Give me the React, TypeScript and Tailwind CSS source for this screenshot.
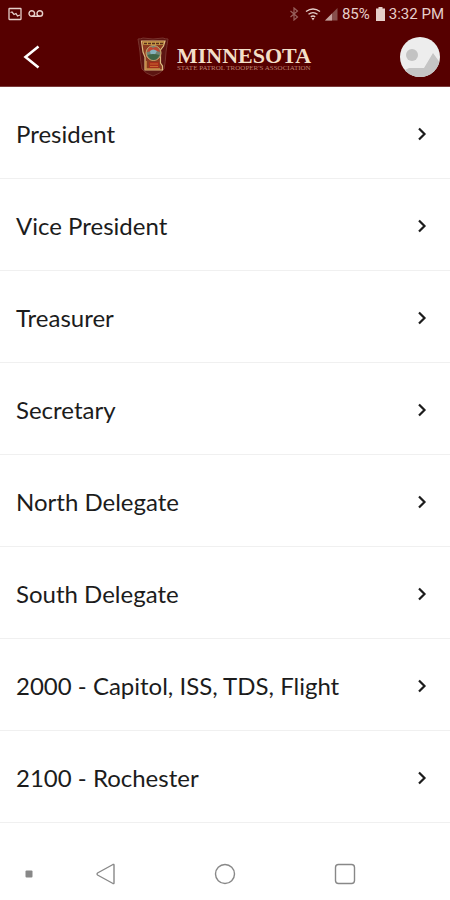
const positions = [
  'President',
  'Vice President',
  'Treasurer',
  'Secretary',
  'North Delegate',
  'South Delegate',
  '2000 - Capitol, ISS, TDS, Flight',
  '2100 - Rochester',
];

function StatusBar() {
  return (
    <div className="flex h-7 items-center justify-between pl-2 pr-1.5 font-[Roboto,sans-serif] text-[15px] text-[#e6cfca]">
      <div className="flex items-center gap-1.5">
        <svg width="14" height="14" viewBox="0 0 14 14" fill="none" stroke="currentColor" strokeWidth="1.3" aria-hidden="true">
          <rect x="1" y="1.5" width="12" height="11" rx="0.5" />
          <path d="M2.500 5.500 4 5l2 2.500 2-1 1.500 2.500L12 8" />
        </svg>
        <svg width="16" height="14" viewBox="0 0 16 14" fill="none" stroke="currentColor" strokeWidth="1.4" aria-hidden="true">
          <circle cx="3.800" cy="6.500" r="2.800" />
          <circle cx="11.800" cy="6.500" r="2.800" />
          <path d="M3.800 9.300h8" />
        </svg>
      </div>
      <div className="flex items-center">
        <svg className="mr-1.5" width="10" height="14" viewBox="0 0 10 14" fill="none" stroke="#98605c" strokeWidth="1.2" aria-hidden="true">
          <path d="m1.500 4 7 6L5 13V1l3.500 3-7 6" />
        </svg>
        <svg className="mr-1" width="16" height="14" viewBox="0 0 16 14" fill="none" stroke="currentColor" strokeWidth="1.400" aria-hidden="true">
          <path d="M1 4.500q7-5 14 0M3.500 7.300q4.500-3.300 9 0M5.800 9.800q2.200-1.500 4.400 0" />
          <path d="M6.500 11h3L8 13.500z" fill="currentColor" stroke="none" />
        </svg>
        <svg className="mr-1" width="13" height="13" viewBox="0 0 13 13" aria-hidden="true">
          <path d="M0 12.500 12.500 0v12.500z" fill="#87504c" />
          <path d="M0 12.500 7 5.500v7z" fill="#c5a19d" />
        </svg>
        <span>85%</span>
        <svg className="ml-1.5 mr-1" width="9" height="14" viewBox="0 0 9 14" fill="currentColor" aria-hidden="true">
          <path d="M2.500 0h4v1.500H9V14H0V1.500h2.500z" />
        </svg>
        <span>3:32 PM</span>
      </div>
    </div>
  );
}

function Shield() {
  return (
    <svg width="32" height="40" viewBox="0 0 32 40" aria-hidden="true">
      <path d="M1 2q3 0 5-1 10 2 20 0 2 1 5 1-1 6-2 13-.5 10-2 17-4 5-11 7-7-2-11-7-1.500-7-2-17Q2 8 1 2Z" fill="#5c1512" stroke="#78332d" />
      <path d="M4.500 4H28l-1.500 5-3 4v13l2 3v4H8V20L6 15Z" fill="#8b3a20" stroke="#dcbb80" strokeWidth="1.200" />
      <path d="M5.500 4.500H27L26 8H6.500Z" fill="#c79a45" />
      <path d="M7 6.500h19" stroke="#592c1d" strokeWidth="1.500" strokeDasharray="3 1" />
      <circle cx="16.500" cy="16" r="7.500" fill="#738372" stroke="#d0a264" />
      <path d="M10 15q2-7 6-4 5-3 7 4l-3-1-3 1-3-1Z" fill="#c04530" />
      <path d="M13 14q3-3 7 0l-3 5h-3Z" fill="#86b2bd" />
      <path d="M10.500 18q5-2 12 0-2 5-6 5t-6-5Z" fill="#3f6545" />
      <path d="M12 25h10v6H12Z" fill="#a72d1b" />
      <path d="M13 27h8M13 29.500h8" stroke="#c8682f" />
      <path d="M9 24v8h14" fill="none" stroke="#ca9149" strokeWidth="1.500" />
    </svg>
  );
}

function Header() {
  return (
    <header className="h-[87px] border-b border-[#7b3b3b] bg-[#560000]">
      <StatusBar />
      <div className="grid h-[58px] grid-cols-[1fr_auto_1fr] items-center px-2.5">
        <button type="button" aria-label="Back" className="flex h-10 w-11 items-center justify-center text-white">
          <svg width="18" height="26" viewBox="0 0 18 26" fill="none" stroke="currentColor" strokeWidth="2.600" aria-hidden="true">
            <path d="M15.500 2.500 2.500 13l13 10.500" />
          </svg>
        </button>
        <div className="flex items-center gap-2 font-['Liberation_Serif',serif]">
          <Shield />
          <div className="whitespace-nowrap pr-0.5 pt-1">
            <div className="text-[22px] font-bold leading-[18px] text-[#f3dfc8]">MINNESOTA</div>
            <div className="text-[7px] leading-[7px] text-[#bd8172]">STATE PATROL TROOPER'S ASSOCIATION</div>
          </div>
        </div>
        <button type="button" aria-label="Profile" className="h-10 w-10 justify-self-end overflow-hidden rounded-full">
          <svg width="40" height="40" viewBox="0 0 40 40" aria-hidden="true">
            <path d="M0 0h40v40H0z" fill="#ededed" />
            <circle cx="12" cy="18" r="6" fill="#c3c3c3" />
            <path d="M5 33 9 31h15l9-15 8 11v13H5Z" fill="#c5c5c5" />
          </svg>
        </button>
      </div>
    </header>
  );
}

export default function App() {
  return (
    <div className="flex min-h-screen flex-col bg-white">
      <Header />
      <main className="flex-1">
        <ul>
          {positions.map((name) => (
            <li key={name} className="border-b border-[#f0f0f0]">
              <button type="button" className="flex h-[91px] w-full items-center justify-between pl-4 pr-5 pt-0.5 text-left font-[Lato,sans-serif] text-2xl text-[#1c1c1c]">
                <span>{name}</span>
                <svg width="16" height="16" viewBox="0 0 16 16" fill="none" stroke="currentColor" strokeWidth="2.200" aria-hidden="true">
                  <path d="m5 2.500 5.500 5.500L5 13.500" />
                </svg>
              </button>
            </li>
          ))}
        </ul>
      </main>
      <nav aria-label="System navigation" className="grid h-[52px] grid-cols-[57px_97px_1fr_97px_57px] items-center justify-items-center text-[#888888]">
        <button type="button" aria-label="Show or hide bar">
          <svg width="8" height="8" viewBox="0 0 8 8" aria-hidden="true">
            <rect x="0.500" y="0.500" width="7" height="7" rx="1" fill="currentColor" />
          </svg>
        </button>
        <button type="button" aria-label="Back">
          <svg width="22" height="22" viewBox="0 0 22 22" fill="none" stroke="currentColor" strokeWidth="1.400" strokeLinejoin="round" aria-hidden="true">
            <path d="M19 2v18q0 1-1 .5L2.500 12q-1-1 0-2L18 1.500q1-.5 1 .5Z" />
          </svg>
        </button>
        <button type="button" aria-label="Home">
          <svg width="22" height="22" viewBox="0 0 22 22" fill="none" stroke="currentColor" strokeWidth="1.400" aria-hidden="true">
            <circle cx="11" cy="11" r="9.500" />
          </svg>
        </button>
        <button type="button" aria-label="Recent apps">
          <svg width="22" height="22" viewBox="0 0 22 22" fill="none" stroke="currentColor" strokeWidth="1.400" aria-hidden="true">
            <rect x="1.500" y="1.500" width="19" height="19" rx="3" />
          </svg>
        </button>
      </nav>
    </div>
  );
}
